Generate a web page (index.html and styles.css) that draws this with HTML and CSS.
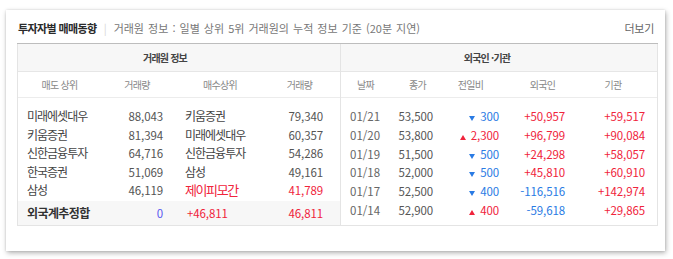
FILE: index.html
```html
<!DOCTYPE html>
<html lang="ko">
<head>
<meta charset="utf-8">
<link rel="stylesheet" href="styles.css">
</head>
<body>
<div class="paper">
  <div class="head">
    <span class="title">투자자별 매매동향</span>
    <span class="bar">|</span>
    <span class="desc">거래원 정보 : 일별 상위 5위 거래원의 누적 정보 기준 (20분 지연)</span>
    <span class="more">더보기</span>
  </div>
  <div class="tables">
    <div class="sec left">
      <div class="cap cap-left">거래원 정보</div>
      <div class="grid lgrid sub">
        <div>매도 상위</div><div>거래량</div><div>매수상위</div><div class="pr8">거래량</div>
      </div>
      <div class="lbody">
        <div class="grid lgrid row"><span class="nm">미래에셋대우</span><span class="num">88,043</span><span class="nm nm3">키움증권</span><span class="num n4">79,340</span></div>
        <div class="grid lgrid row"><span class="nm">키움증권</span><span class="num">81,394</span><span class="nm nm3">미래에셋대우</span><span class="num n4">60,357</span></div>
        <div class="grid lgrid row"><span class="nm">신한금융투자</span><span class="num">64,716</span><span class="nm nm3">신한금융투자</span><span class="num n4">54,286</span></div>
        <div class="grid lgrid row"><span class="nm">한국증권</span><span class="num">51,069</span><span class="nm nm3">삼성</span><span class="num n4">49,161</span></div>
        <div class="grid lgrid row"><span class="nm">삼성</span><span class="num">46,119</span><span class="nm nm3 red big">제이피모간</span><span class="num n4 red">41,789</span></div>
      </div>
      <div class="grid lgrid sum"><span class="nm bold">외국계추정합</span><span class="num zero">0</span><span class="num lft red">+46,811</span><span class="num n4 red">46,811</span></div>
    </div>
    <div class="sec right">
      <div class="cap cap-right">외국인 ·기관</div>
      <div class="grid rgrid sub">
        <div>날짜</div><div>종가</div><div class="pr14">전일비</div><div>외국인</div><div class="pr6">기관</div>
      </div>
      <div class="rbody">
        <div class="grid rgrid rrow"><span class="dt">01/21</span><span class="num c2">53,500</span><span class="num c3 blue"><svg class="tri" width="6" height="5" viewBox="0 0 6 5"><path d="M0 0H6L3 5Z" fill="#2a7be4"/></svg>300</span><span class="num c4 red">+50,957</span><span class="num c5 red">+59,517</span></div>
        <div class="grid rgrid rrow"><span class="dt">01/20</span><span class="num c2">53,800</span><span class="num c3 red"><svg class="tri" width="6" height="5" viewBox="0 0 6 5"><path d="M0 5H6L3 0Z" fill="#f0243c"/></svg>2,300</span><span class="num c4 red">+96,799</span><span class="num c5 red">+90,084</span></div>
        <div class="grid rgrid rrow"><span class="dt">01/19</span><span class="num c2">51,500</span><span class="num c3 blue"><svg class="tri" width="6" height="5" viewBox="0 0 6 5"><path d="M0 0H6L3 5Z" fill="#2a7be4"/></svg>500</span><span class="num c4 red">+24,298</span><span class="num c5 red">+58,057</span></div>
        <div class="grid rgrid rrow"><span class="dt">01/18</span><span class="num c2">52,000</span><span class="num c3 blue"><svg class="tri" width="6" height="5" viewBox="0 0 6 5"><path d="M0 0H6L3 5Z" fill="#2a7be4"/></svg>500</span><span class="num c4 red">+45,810</span><span class="num c5 red">+60,910</span></div>
        <div class="grid rgrid rrow"><span class="dt">01/17</span><span class="num c2">52,500</span><span class="num c3 blue"><svg class="tri" width="6" height="5" viewBox="0 0 6 5"><path d="M0 0H6L3 5Z" fill="#2a7be4"/></svg>400</span><span class="num c4 blue">-116,516</span><span class="num c5 red">+142,974</span></div>
        <div class="grid rgrid rrow"><span class="dt">01/14</span><span class="num c2">52,900</span><span class="num c3 red"><svg class="tri" width="6" height="5" viewBox="0 0 6 5"><path d="M0 5H6L3 0Z" fill="#f0243c"/></svg>400</span><span class="num c4 blue">-59,618</span><span class="num c5 red">+29,865</span></div>
      </div>
    </div>
  </div>
</div>
</body>
</html>
```
FILE: styles.css
```css
html, body {
  margin: 0;
  padding: 0;
  background: #ffffff;
}
body {
  font-family: "Noto Sans CJK KR", sans-serif;
  color: #555;
  width: 673px;
  height: 259px;
  overflow: hidden;
}
.paper {
  margin: 10px 0 0 6px;
  width: 641px;
  height: 218px;
  padding: 7px 7px 16px 11px;
  background: #fff;
  box-shadow: 1px 2px 5px rgba(0, 0, 0, 0.3), 0 0 2px rgba(0, 0, 0, 0.12);
}
.head {
  display: flex;
  align-items: center;
  height: 22px;
  padding-bottom: 4px;
  border-bottom: 1px solid #bdbdbd;
  padding-left: 1px;
  padding-right: 4px;
}
.title {
  font-size: 11px;
  font-weight: 700;
  color: #2a2a2a;
  letter-spacing: -0.6px;
}
.bar {
  color: #d6d6d6;
  font-size: 11px;
  margin: 0 7px 0 7px;
}
.desc {
  font-size: 11px;
  color: #777;
  letter-spacing: 0;
  word-spacing: 1px;
}
.more {
  margin-left: auto;
  font-size: 11px;
  color: #666;
  letter-spacing: -0.3px;
}
.tables {
  display: flex;
  border: 1px solid #e4e4e4;
  border-top: none;
  height: 181px;
}
.sec.left {
  width: 322px;
}
.sec.right {
  width: 316px;
  border-left: 1px solid #e4e4e4;
}
.cap {
  height: 27px;
  line-height: 27px;
  background: #f7f7f7;
  border-bottom: 1px solid #e6e6e6;
  text-align: center;
  font-size: 10px;
  font-weight: 700;
  color: #444;
  letter-spacing: -0.8px;
}
.cap-left { padding-right: 28px; }
.cap-right { padding-right: 24px; }
.grid { display: grid; }
.lgrid { grid-template-columns: 83px 72px 94px 73px; }
.rgrid { grid-template-columns: 49px 55px 65px 65px 82px; }
.sub {
  height: 25px;
  line-height: 25px;
  border-bottom: 1px solid #ececec;
  text-align: center;
  font-size: 10px;
  color: #888;
  letter-spacing: -0.7px;
}
.pr8 { padding-right: 8px; }
.pr14 { padding-right: 14px; }
.pr6 { padding-right: 6px; }
.lbody {
  padding-top: 9px;
  height: 93px;
}
.row {
  height: 18.5px;
  line-height: 18.5px;
}
.rbody { padding-top: 9px; }
.rrow {
  height: 18.8px;
  line-height: 18.8px;
}
.nm {
  font-size: 12px;
  color: #444;
  letter-spacing: -1px;
  padding-left: 9px;
  white-space: nowrap;
}
.nm3 { padding-left: 12px; }
.big { font-size: 13px; letter-spacing: -1.4px; }
.bold { font-weight: 700; color: #333; font-size: 12px; letter-spacing: -0.6px; }
.num {
  font-size: 11.5px;
  color: #555;
  text-align: right;
  padding-right: 10px;
  letter-spacing: -0.1px;
  white-space: nowrap;
}
.n4 { padding-right: 17px; }
.lft { text-align: left; padding-left: 14px; padding-right: 0; }
.sum {
  height: 24px;
  line-height: 24px;
  background: #f7f7f7;
  margin-top: 0.5px;
}
.dt {
  font-size: 11.5px;
  color: #666;
  padding-left: 9px;
}
.c2 { padding-right: 12px; }
.c3 { padding-right: 11px; }
.c4 { padding-right: 10px; }
.c5 { padding-right: 12px; }
.tri { margin-right: 5px; vertical-align: 0; }
.red { color: #f0243c; }
.blue { color: #2a7be4; }
.zero { color: #5a5af0; }
```
